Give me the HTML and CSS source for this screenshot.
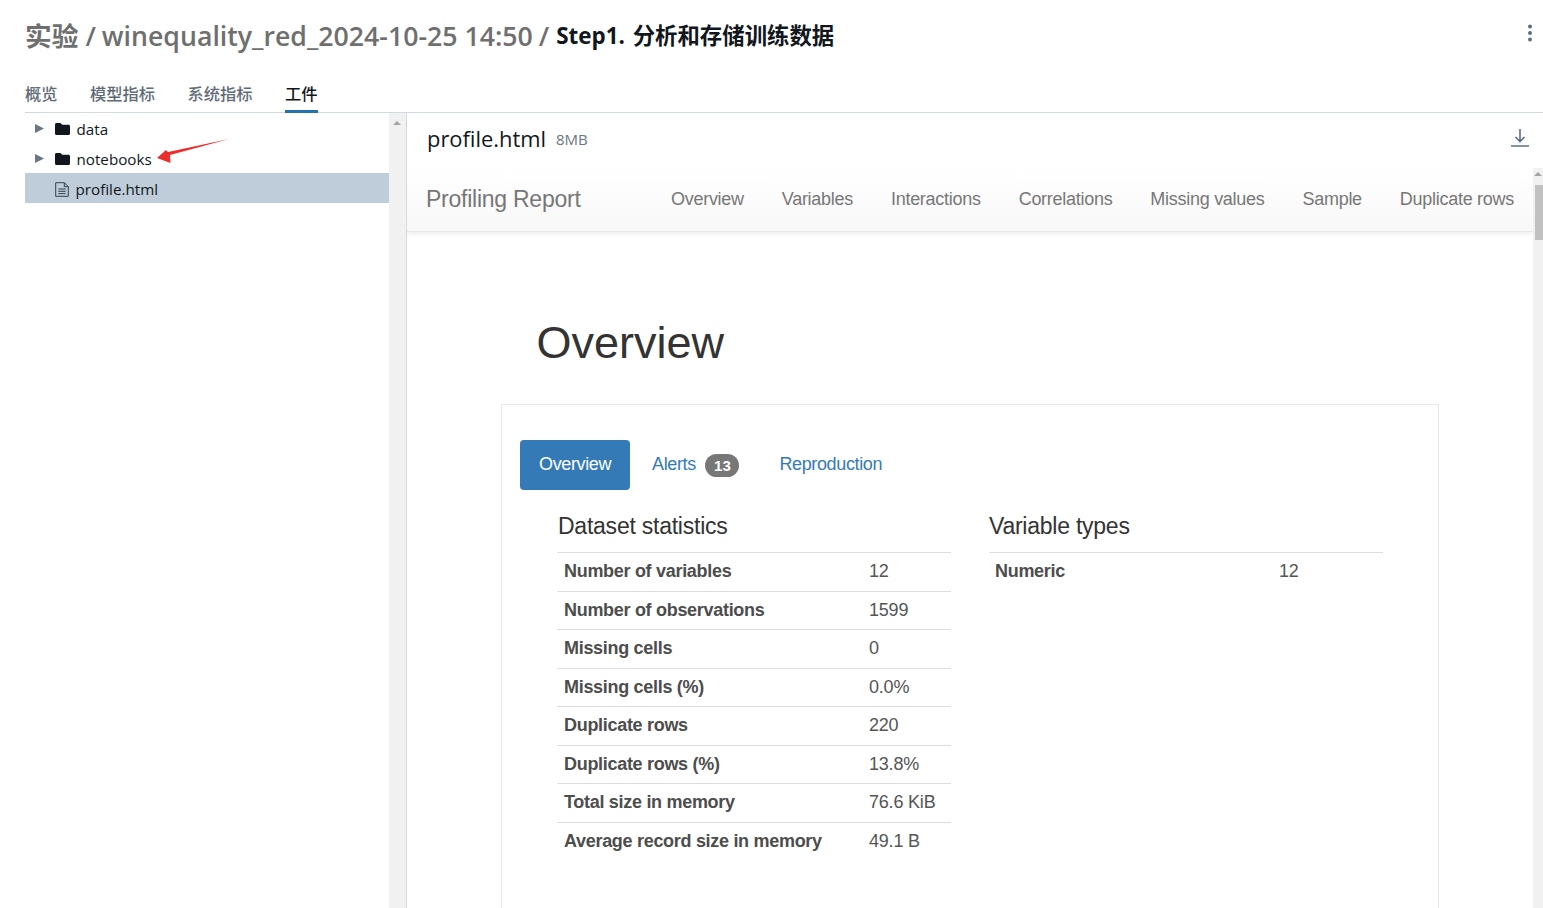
FILE: index.html
```html
<!DOCTYPE html>
<html lang="zh">
<head>
<meta charset="utf-8">
<title>profile.html</title>
<link rel="stylesheet" href="styles.css">
</head>
<body>
<div class="app">
  <header class="page-head">
    <h1 class="crumbs"><span class="crumb">实验</span><span class="sep">/</span><span class="crumb">winequality_red_2024-10-25 14:50</span><span class="sep sep-last">/</span><span class="current">Step1. 分析和存储训练数据</span></h1>
    <svg class="kebab" width="6" height="18" viewBox="0 0 6 18"><circle cx="3" cy="2.5" r="2"/><circle cx="3" cy="9" r="2"/><circle cx="3" cy="15.5" r="2"/></svg>
  </header>
  <nav class="tabs">
    <a class="tab">概览</a>
    <a class="tab">模型指标</a>
    <a class="tab">系统指标</a>
    <a class="tab active">工件</a>
  </nav>
  <div class="split">
    <aside class="tree">
      <div class="tree-row">
        <svg class="caret" width="9" height="9" viewBox="0 0 9 9"><path d="M0 0l9 4.5L0 9z"/></svg>
        <svg class="folder" width="15" height="12" viewBox="0 0 15 12"><path d="M1.500 0h4l1.600 1.800h6.400c.8 0 1.500.7 1.500 1.500v7.200c0 .8-.7 1.500-1.500 1.500h-12C.7 12 0 11.300 0 10.500v-9C0 .7.700 0 1.500 0z"/></svg>
        <span>data</span>
      </div>
      <div class="tree-row">
        <svg class="caret" width="9" height="9" viewBox="0 0 9 9"><path d="M0 0l9 4.5L0 9z"/></svg>
        <svg class="folder" width="15" height="12" viewBox="0 0 15 12"><path d="M1.500 0h4l1.600 1.800h6.400c.8 0 1.500.7 1.500 1.500v7.200c0 .8-.7 1.500-1.500 1.500h-12C.7 12 0 11.300 0 10.500v-9C0 .7.700 0 1.500 0z"/></svg>
        <span>notebooks</span>
        <svg class="arrow" width="73" height="25" viewBox="0 0 73 25"><path d="M72 0 13 16 13.500 24 0 19 9 11 11 13z" fill="#ee2c2c"/></svg>
      </div>
      <div class="tree-row selected">
        <svg class="file" width="14" height="15" viewBox="0 0 14 15" fill="none"><path d="M.7.7h8.600l4 4v9.600H.7zM9.300.7v4h4M3.300 7h7.400M3.300 9.300h7.400M3.300 11.600h7.400" stroke="#333f4d" stroke-width="1"/></svg>
        <span>profile.html</span>
      </div>
    </aside>
    <div class="gutter"><i class="up"></i></div>
    <section class="viewer">
      <div class="viewer-head">
        <div class="file-title"><span class="file-name">profile.html</span><span class="file-size">8MB</span></div>
        <svg class="download" width="20" height="20" viewBox="0 0 20 20" fill="none"><path d="M10 1v12.500M5.500 9 10 13.500 14.500 9M1 18h18" stroke="#5c7080" stroke-width="1.600"/></svg>
      </div>
      <div class="frame">
        <div class="report">
          <div class="navbar">
            <span class="brand">Profiling Report</span>
            <div class="nav-links">
              <a>Overview</a><a>Variables</a><a>Interactions</a><a>Correlations</a><a>Missing values</a><a>Sample</a><a>Duplicate rows</a>
            </div>
          </div>
          <h2 class="section-title">Overview</h2>
          <div class="card">
            <div class="pills">
              <a class="pill active">Overview</a>
              <a class="pill">Alerts <span class="badge">13</span></a>
              <a class="pill">Reproduction</a>
            </div>
            <div class="stats">
              <div class="col col-left">
                <h3>Dataset statistics</h3>
                <table>
                  <tr><th>Number of variables</th><td>12</td></tr>
                  <tr><th>Number of observations</th><td>1599</td></tr>
                  <tr><th>Missing cells</th><td>0</td></tr>
                  <tr><th>Missing cells (%)</th><td>0.0%</td></tr>
                  <tr><th>Duplicate rows</th><td>220</td></tr>
                  <tr><th>Duplicate rows (%)</th><td>13.8%</td></tr>
                  <tr><th>Total size in memory</th><td>76.6 KiB</td></tr>
                  <tr><th>Average record size in memory</th><td>49.1 B</td></tr>
                </table>
              </div>
              <div class="col col-right">
                <h3>Variable types</h3>
                <table>
                  <tr><th>Numeric</th><td>12</td></tr>
                </table>
              </div>
            </div>
          </div>
        </div>
        <div class="vscroll"><i class="up"></i><div class="thumb"></div></div>
      </div>
    </section>
  </div>
</div>
</body>
</html>
```
FILE: styles.css
```css
* { box-sizing: border-box; }
html, body { margin: 0; height: 100%; overflow: hidden; background: #fff; }
body { font-family: "Open Sans", "Noto Sans CJK SC", sans-serif; color: #11171c; }
.app { height: 908px; display: flex; flex-direction: column; padding-left: 25px; }

.page-head { height: 72px; display: flex; justify-content: space-between; align-items: flex-start; padding-top: 18px; padding-right: 10px; }
.crumbs { margin: 0; font-size: 26.700px; line-height: 36px; font-weight: 600; display: flex; white-space: nowrap; }
.crumb, .sep { color: #6f6f6f; }
.sep { margin: 0 6px 0 7px; }
.sep-last { margin: 0 7px 0 6px; }
.current { font-size: 22.400px; font-weight: 700; color: #11171c; word-spacing: 2px; }
.kebab { fill: #5c7080; margin-top: 6px; }

.tabs { height: 41px; display: flex; gap: 32.500px; border-bottom: 1px solid #d1d9e1; font-family: "Noto Sans CJK SC", sans-serif; font-size: 16.250px; }
.tab { height: 41px; line-height: 42px; color: #5f6b76; font-weight: 500; }
.tab.active { color: #11171c; border-bottom: 3px solid #2272b4; }

.split { flex: 1; min-height: 0; display: flex; }
.tree { width: 364px; font-size: 15.200px; }
.tree-row { position: relative; height: 30px; display: flex; align-items: center; padding: 2px 0 0 10px; }
.caret { fill: #6b7680; margin: -2px 11px 0 0; }
.folder { fill: #11171c; margin-right: 6.500px; }
.arrow { position: absolute; left: 132px; top: -4px; }
.tree-row.selected { background: #bfccd9; padding-left: 30px; }
.file { margin-right: 6.500px; }
.gutter { width: 18px; background: #f1f1f1; border-right: 1px solid #d1d9e1; position: relative; }
.up { position: absolute; width: 0; height: 0; border-left: 4px solid transparent; border-right: 4px solid transparent; border-bottom: 4px solid #a3a3a3; top: 8px; left: 4px; }

.viewer { flex: 1; min-width: 0; display: flex; flex-direction: column; }
.viewer-head { height: 55px; display: flex; justify-content: space-between; align-items: flex-start; padding: 9px 13px 0 20px; }
.file-title { display: flex; align-items: center; gap: 10px; }
.file-name { font-size: 21.900px; line-height: 33px; font-weight: 500; }
.file-size { font-size: 15px; color: #6b7680; }
.download { margin-top: 6px; }

.frame { flex: 1; min-height: 0; display: flex; font-family: "Liberation Sans", sans-serif; color: #333; }
.report { flex: 1; min-width: 0; overflow: hidden; }
.navbar { height: 64px; display: flex; align-items: center; justify-content: space-between; padding: 0 19px 1px 19px; background: linear-gradient(#fff, #f8f8f8); border-bottom: 1px solid #e7e7e7; box-shadow: 0 2px 5px rgba(0,0,0,.075); }
.brand { font-size: 23px; letter-spacing: -.25px; color: #777; }
.nav-links { display: flex; gap: 38px; font-size: 18px; letter-spacing: -.28px; color: #777; padding-top: 1px; }
.section-title { margin: 86px 0 0 129.500px; font-size: 45px; line-height: 50px; font-weight: 400; }
.card { margin: 36px 0 0 94px; width: 938px; height: 600px; border: 1px solid #e7e7e7; padding: 35px 18px 0; }
.pills { display: flex; align-items: flex-start; font-size: 18px; letter-spacing: -.37px; color: #337ab7; height: 50px; }
.pill { padding: 0 19px 2px; line-height: 48px; height: 50px; border-radius: 4px; }
.pill.active { background: #337ab7; color: #fff; width: 110px; margin-right: 3px; }
.pill + .pill + .pill { padding-left: 21px; }
.badge { display: inline-block; min-width: 34px; padding: 0 7px; margin-left: 5px; height: 23px; line-height: 23px; border-radius: 12px; background: #777; color: #fff; font-size: 15px; font-weight: 700; text-align: center; vertical-align: -1px; letter-spacing: 0; }
.stats { display: flex; padding: 0 0 0 37px; }
.col { width: 394px; }
.col-right { margin-left: 38px; }
.col h3 { margin: 0; height: 62px; line-height: 72px; font-size: 23px; font-weight: 400; letter-spacing: -.24px; padding-left: 1px; }
.col-right h3 { padding-left: 0; }
table { width: 100%; border-collapse: collapse; font-size: 18px; letter-spacing: -.2px; color: #555; table-layout: fixed; }
tr { height: 38.500px; border-top: 1px solid #ddd; }
.col-right tr { height: 38px; }
th { text-align: left; padding: 0 6px 0 7px; font-weight: 700; width: 306px; color: #4d4d4d; letter-spacing: -.3px; }
.col-right th { width: 284px; padding-left: 6px; }
td { padding: 0 6px; }

.vscroll { width: 10px; background: #f1f1f1; position: relative; flex: none; }
.vscroll .up { top: 4px; left: 1px; }
.vscroll .thumb { position: absolute; top: 17px; left: 2px; width: 8px; height: 55px; background: #c1c1c1; }
```
